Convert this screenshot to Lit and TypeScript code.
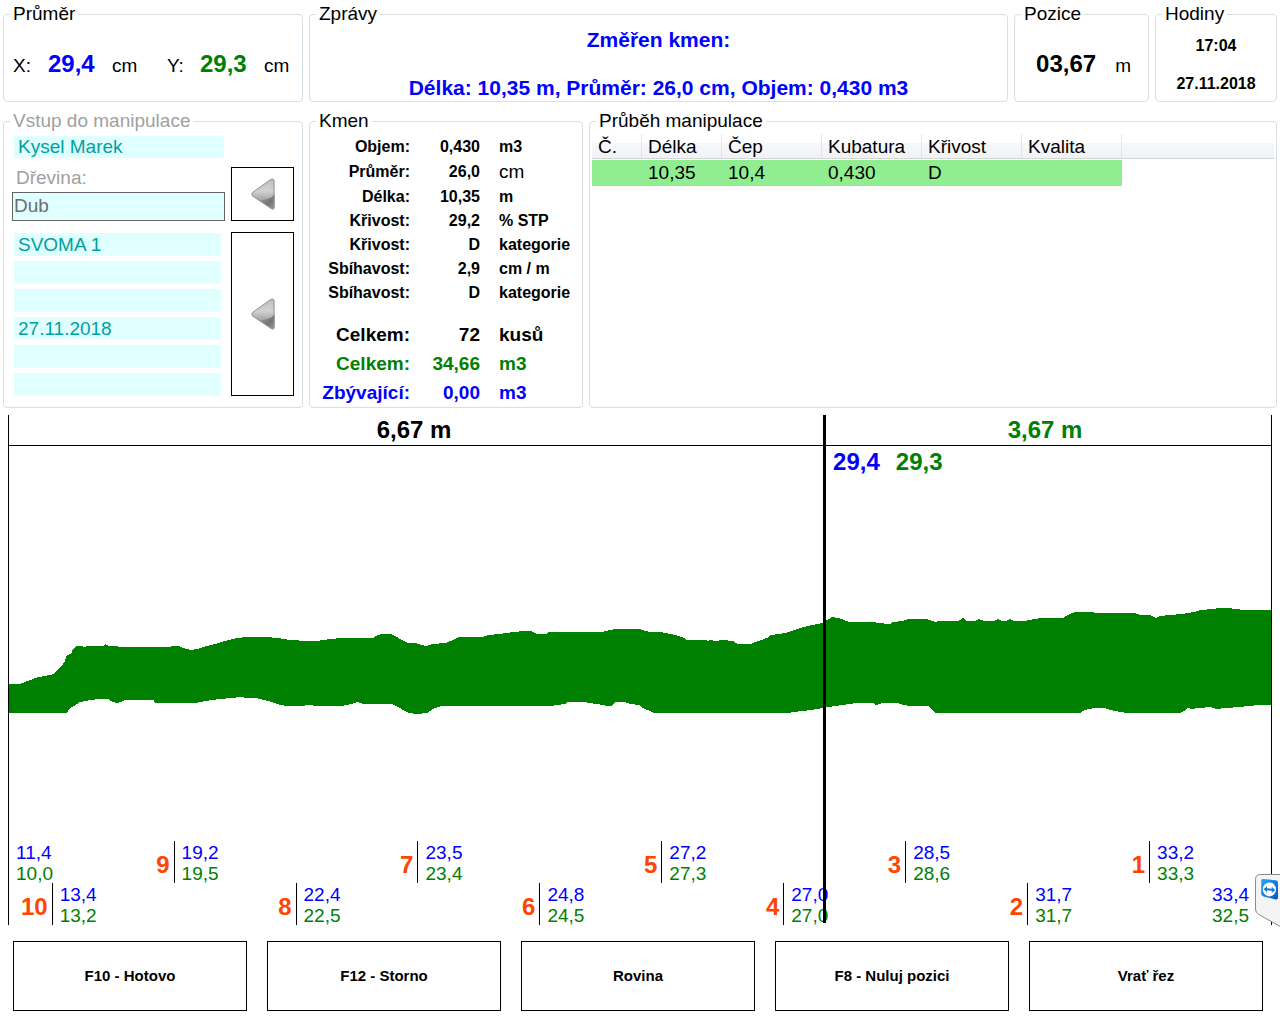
import { LitElement, html, svg, css } from "lit";
import { customElement, property } from "lit/decorators.js";
import { classMap } from "lit/directives/class-map.js";
import { styleMap } from "lit/directives/style-map.js";

const FONT = css`
  font-family: "Liberation Sans", Arial, Helvetica, sans-serif;
`;

/* Length of the measured stem and the saw position, in metres. */
const STEM_LENGTH = 10.34;
const SAW_POSITION = 3.67;

/* Outline of the stem, upper edge left to right. */
const TOP_EDGE =
  "9,684 20,684 25,682 33,679 38,677 45,676 54,674 57,670 61,667 65,661 67,655 71,654 73,649 77,646 82,646 84,647 88,646 103,646 105,644 109,646 127,647 170,647 171,646 179,646 186,649 191,650 197,649 203,647 215,644 225,641 237,638 247,637 265,637 278,638 290,640 308,641 316,641 330,639 342,638 373,638 378,635 382,634 391,634 397,637 402,640 408,643 416,643 421,645 426,646 432,644 446,643 453,640 459,637 482,637 488,635 500,634 513,632 525,631 531,631 537,634 546,634 549,632 602,632 615,629 639,629 650,632 661,632 675,635 684,638 687,640 706,640 707,641 710,640 716,641 722,640 733,641 738,644 751,644 758,641 767,638 771,635 785,633 800,628 812,625 823,623 826,620 829,619 832,617 842,619 849,622 874,622 877,623 890,624 893,622 902,621 909,619 927,619 935,622 939,621 958,621 960,620 963,618 967,621 975,621 979,619 984,621 994,621 998,619 1002,621 1006,621 1010,619 1014,621 1025,621 1029,620 1041,618 1063,618 1068,615 1075,612 1093,612 1094,613 1135,613 1140,615 1150,615 1156,618 1160,616 1170,615 1182,614 1194,612 1200,610 1213,609 1218,608 1230,608 1234,609 1246,610 1271,610";
/* Lower edge, right to left. */
const BOTTOM_EDGE =
  "1271,705 1260,705 1248,706 1240,707 1226,708 1216,709 1211,707 1198,708 1192,709 1187,708 1186,710 1180,713 1127,713 1120,712 1110,710 1104,708 1094,708 1085,710 1080,713 936,713 931,709 928,706 911,706 903,705 897,703 882,703 876,705 873,703 856,703 842,705 835,706 823,708 811,710 803,711 793,712 788,713 654,713 650,711 643,708 639,705 630,704 625,702 616,702 611,706 607,706 598,704 588,703 585,702 568,702 565,704 550,706 447,706 441,706 433,709 427,713 417,714 409,713 405,711 398,707 392,704 378,704 363,704 357,702 351,704 342,706 317,706 308,705 302,706 288,706 280,705 272,702 264,700 256,698 247,698 240,697 231,698 220,699 205,701 195,703 155,703 154,700 125,700 121,702 116,703 113,702 108,699 100,699 90,700 80,702 74,706 69,709 67,713 9,713";

interface Mark {
  metre: number;
  x: string;
  y: string;
}

const MARKS: Mark[] = [
  { metre: 10, x: "13,4", y: "13,2" },
  { metre: 9, x: "19,2", y: "19,5" },
  { metre: 8, x: "22,4", y: "22,5" },
  { metre: 7, x: "23,5", y: "23,4" },
  { metre: 6, x: "24,8", y: "24,5" },
  { metre: 5, x: "27,2", y: "27,3" },
  { metre: 4, x: "27,0", y: "27,0" },
  { metre: 3, x: "28,5", y: "28,6" },
  { metre: 2, x: "31,7", y: "31,7" },
  { metre: 1, x: "33,2", y: "33,3" },
];

/* Titled frame used by every panel. */
@customElement("group-box")
export class GroupBox extends LitElement {
  @property() caption = "";
  @property({ type: Boolean }) muted = false;

  static styles = css`
    :host {
      display: flex;
      min-width: 0;
      ${FONT}
    }
    .frame {
      flex: 1;
      min-width: 0;
      margin: 0;
      padding: 0 2px;
      border: 1px solid #d5dfe5;
      border-radius: 4px;
    }
    .caption {
      margin-left: 4px;
      padding: 0 3px;
      font-size: 19px;
      line-height: 22px;
      white-space: nowrap;
    }
    .muted {
      color: #a0a0a0;
    }
  `;

  render() {
    return html`<fieldset class="frame">
      <legend class=${classMap({ caption: true, muted: this.muted })}>${this.caption}</legend>
      <slot></slot>
    </fieldset>`;
  }
}

/* Two-edge profile of the stem with metre marks and the saw line. */
@customElement("stem-chart")
export class StemChart extends LitElement {
  static styles = css`
    :host {
      display: flex;
      flex-direction: column;
      position: relative;
      border-left: 1px solid #000;
      border-right: 1px solid #000;
      box-sizing: border-box;
      ${FONT}
    }
    .lengths {
      display: flex;
      border-bottom: 1px solid #000;
      font-size: 24px;
      font-weight: bold;
      line-height: 30px;
      text-align: center;
    }
    .length {
      box-sizing: border-box;
      padding-right: 4px;
    }
    .green {
      color: #008000;
    }
    .blue {
      color: #0000ff;
    }
    .profile {
      flex: 1 1 0px;
      height: 0;
      min-height: 0;
      width: 100%;
      display: block;
    }
    .scale {
      display: grid;
      grid-template-columns: minmax(0, 35fr) repeat(10, minmax(0, 100fr));
      grid-template-rows: 42px 42px;
      font-size: 19px;
      line-height: 21px;
      white-space: nowrap;
    }
    .upper {
      grid-row: 1;
    }
    .lower {
      grid-row: 2;
    }
    .sample {
      padding: 1px 0 0 7px;
      box-sizing: border-box;
    }
    .ticked {
      border-left: 1px solid #000;
    }
    .last {
      padding-right: 22px;
      text-align: right;
    }
    .metre {
      padding: 6px 4px 0 0;
      text-align: right;
      justify-self: end;
      font-size: 24px;
      line-height: 36px;
      font-weight: bold;
      color: #ff4500;
    }
    .saw {
      position: absolute;
      top: 0;
      bottom: 2px;
      border-left: 3px solid #000;
    }
    .reading {
      display: flex;
      gap: 16px;
      padding: 33px 0 0 7px;
      font-size: 24px;
      font-weight: bold;
      line-height: 28px;
    }
  `;

  render() {
    const left = ((STEM_LENGTH - SAW_POSITION) / STEM_LENGTH) * 100;
    return html`
      <div class="lengths">
        <div class="length" style=${styleMap({ width: `${left}%` })}>6,67 m</div>
        <div class="length green" style=${styleMap({ width: `${100 - left}%` })}>3,67 m</div>
      </div>
      <svg
        class="profile"
        viewBox="9 446 1262 395"
        preserveAspectRatio="none"
        shape-rendering="crispEdges"
        aria-hidden="true"
      >
        ${svg`<polygon fill="#008000" points="${TOP_EDGE} ${BOTTOM_EDGE}"></polygon>`}
      </svg>
      <div class="scale">
        <div class="sample upper" style=${styleMap({ gridColumn: "1" })}>
          <div class="blue">11,4</div>
          <div class="green">10,0</div>
        </div>
        ${MARKS.map((m, i) => {
          const row = m.metre % 2 ? "upper" : "lower";
          return html`
            <div class="metre ${row}" style=${styleMap({ gridColumn: `${i + 1}` })}>${m.metre}</div>
            <div class="sample ticked ${row}" style=${styleMap({ gridColumn: `${i + 2}` })}>
              <div class="blue">${m.x}</div>
              <div class="green">${m.y}</div>
            </div>
          `;
        })}
        <div class="sample last lower" style=${styleMap({ gridColumn: "11" })}>
          <div class="blue">33,4</div>
          <div class="green">32,5</div>
        </div>
      </div>
      <div class="saw" style=${styleMap({ left: `${left}%` })}>
        <div class="reading"><span class="blue">29,4</span><span class="green">29,3</span></div>
      </div>
    `;
  }
}

const arrow = () => html`<svg class="arrow" viewBox="0 0 24 32" aria-hidden="true">
  <defs>
    <linearGradient id="face" x1="0" y1="0" x2="0" y2="1">
      <stop offset="0" stop-color="#bdbdbd"></stop>
      <stop offset="0.4" stop-color="#d2d2d2"></stop>
      <stop offset="0.7" stop-color="#a4a4a4"></stop>
    </linearGradient>
    <linearGradient id="shade" x1="0" y1="0" x2="1" y2="1">
      <stop offset="0" stop-color="#a8a8a8"></stop>
      <stop offset="0.6" stop-color="#747474"></stop>
      <stop offset="1" stop-color="#9a9a9a"></stop>
    </linearGradient>
  </defs>
  <path
    d="M1.4 14.2 19.6 1.2Q23.3-.4 23.4 3V29.4Q23.2 32.4 20.2 30.8L1.4 18.2Q-.4 16.2 1.4 14.2Z"
    fill="url(#face)"
  ></path>
  <path d="M8 22.4Q20 21.6 23.4 16.5V29.4Q23.2 32.4 20.2 30.8Z" fill="url(#shade)"></path>
  <path
    d="M1.6 14.5 19.6 1.6Q22.9.2 23 3V29.2Q22.9 31.8 20.4 30.4L1.6 17.9Q0 16.2 1.6 14.5Z"
    fill="none"
    stroke="#929292"
    stroke-width="1"
  ></path>
</svg>`;

const STEM_ROWS = [
  ["Objem:", "0,430", "m3", "tall"],
  ["Průměr:", "26,0", "cm", "tall light"],
  ["Délka:", "10,35", "m", "tall"],
  ["Křivost:", "29,2", "% STP", ""],
  ["Křivost:", "D", "kategorie", ""],
  ["Sbíhavost:", "2,9", "cm / m", ""],
  ["Sbíhavost:", "D", "kategorie", ""],
];
const TOTAL_ROWS = [
  ["Celkem:", "72", "kusů", ""],
  ["Celkem:", "34,66", "m3", "green"],
  ["Zbývající:", "0,00", "m3", "blue"],
];
const BATCH = ["SVOMA 1", "", "", "27.11.2018", "", ""];
const ACTIONS = ["F10 - Hotovo", "F12 - Storno", "Rovina", "F8 - Nuluj pozici", "Vrať řez"];

@customElement("app-root")
export class AppRoot extends LitElement {
  static styles = css`
    :host {
      display: flex;
      flex-direction: column;
      position: relative;
      box-sizing: border-box;
      min-height: 100vh;
      padding-top: 3px;
      overflow: hidden;
      background: #fff;
      color: #000;
      font-size: 19px;
      line-height: 22px;
      ${FONT}
    }
    .row {
      display: grid;
      gap: 6px;
      padding: 0 3px;
    }
    .status {
      grid-template-columns: 300px minmax(0, 1fr) 135px 122px;
      margin-bottom: 8px;
    }
    .panels {
      grid-template-columns: 300px 274px minmax(0, 1fr);
      margin-bottom: 7px;
    }
    .blue {
      color: #0000ff;
    }
    .green {
      color: #008000;
    }

    .diameter {
      display: grid;
      grid-template-columns: 35px 64px 55px 33px 64px auto;
      align-items: baseline;
      padding: 25px 0 0 7px;
    }
    .big {
      font-size: 24px;
      line-height: 28px;
      font-weight: bold;
    }
    .messages {
      display: flex;
      flex-direction: column;
      gap: 22px;
      padding-top: 2px;
      text-align: center;
      font-size: 21px;
      line-height: 26px;
      font-weight: bold;
    }
    .message {
      margin: 0;
      min-height: 26px;
    }
    .position {
      display: flex;
      justify-content: flex-end;
      align-items: baseline;
      gap: 19px;
      padding: 25px 15px 0 0;
    }
    .clock {
      display: flex;
      flex-direction: column;
      gap: 16px;
      padding-top: 10px;
      text-align: center;
      font-size: 16px;
      font-weight: bold;
    }

    .entry {
      display: grid;
      grid-template-columns: minmax(0, 1fr) 63px;
      column-gap: 6px;
      padding: 4px 6px 0;
    }
    .field {
      box-sizing: border-box;
      display: block;
      width: 100%;
      height: 23px;
      margin: 0;
      padding: 0 4px;
      border: 0;
      border-radius: 0;
      outline: 0;
      background: #e0ffff;
      color: #00a0a0;
      font: inherit;
    }
    .owner {
      padding: 0 1px 9px 2px;
    }
    .owner .field {
      height: 22px;
    }
    .species {
      grid-column: 1;
      display: flex;
      flex-direction: column;
      gap: 3px;
    }
    .label {
      padding-left: 4px;
      color: #a0a0a0;
    }
    .species .field {
      height: 29px;
      padding: 0 1px 2px;
      border: 1px solid #646464;
      color: #6d6d6d;
    }
    .batch {
      grid-column: 1;
      display: flex;
      flex-direction: column;
      gap: 5px;
      margin-top: 11px;
      padding: 1px 4px 0 2px;
    }
    .pick {
      grid-column: 2;
      display: flex;
      align-items: center;
      justify-content: center;
      padding: 0;
      border: 1px solid #000;
      background: #fff;
    }
    .pick.long {
      margin-top: 11px;
    }
    .arrow {
      width: 24px;
      height: 32px;
    }

    .facts {
      width: 100%;
      padding-top: 2px;
      border-spacing: 0;
      table-layout: fixed;
      font-size: 16px;
      font-weight: bold;
      white-space: nowrap;
    }
    .facts td,
    .facts th {
      padding: 0;
      height: 24px;
      line-height: 22px;
    }
    .facts .tall td,
    .facts .tall th {
      height: 25px;
    }
    .facts th,
    .facts .amount {
      text-align: right;
    }
    .facts .name {
      width: 98px;
    }
    .facts .amount {
      width: 70px;
    }
    .facts .unit {
      padding-left: 19px;
    }
    .facts .light .unit {
      font-size: 19px;
      font-weight: normal;
    }
    .totals {
      margin-top: 13px;
      font-size: 19px;
    }
    .totals td,
    .totals th {
      height: 29px;
    }

    .log {
      width: 100%;
      padding-top: 2px;
      border-spacing: 0;
      table-layout: fixed;
      text-align: left;
      white-space: nowrap;
    }
    .log th {
      box-sizing: border-box;
      height: 25px;
      padding: 2px 0 0 6px;
      border-bottom: 1px solid #d5d5d5;
      background: linear-gradient(#fff 9px, #f7f8fa 9px, #f1f2f4);
      box-shadow: inset -1px 0 #e3e4e6;
      font-weight: normal;
    }
    .log th:last-child {
      box-shadow: none;
    }
    .log td {
      height: 26px;
      padding: 0 0 0 6px;
      background: #90ee90;
      border-top: 1px solid #fff;
    }
    .log td:last-child {
      background: none;
    }
    .log .w50 {
      width: 50px;
    }
    .log .w80 {
      width: 80px;
    }
    .log .w100 {
      width: 100px;
    }

    .chart {
      flex: 1 1 360px;
      margin: 0 8px;
    }

    .actions {
      display: flex;
      gap: 20px;
      padding: 16px 17px 13px 13px;
    }
    .action {
      flex: 1;
      min-width: 0;
      padding: 23px 4px;
      border: 1px solid #000;
      background: #fff;
      color: #000;
      font: bold 15px/22px "Liberation Sans", Arial, sans-serif;
    }

    .remote {
      position: absolute;
      right: 0;
      bottom: 96px;
      padding: 0;
      border: 0;
      background: none;
    }
    .remote-icon {
      display: block;
      width: 25px;
      height: 54px;
    }
  `;

  private facts(rows: string[][], extra = "") {
    return html`<table class="facts ${extra}">
      <tbody>
        ${rows.map(
          ([name, amount, unit, kind]) => html`<tr class=${kind}>
            <th class="name" scope="row">${name}</th>
            <td class="amount">${amount}</td>
            <td class="unit">${unit}</td>
          </tr>`
        )}
      </tbody>
    </table>`;
  }

  render() {
    return html`
      <div class="row status">
        <group-box caption="Průměr">
          <div class="diameter">
            <span>X:</span><span class="big blue">29,4</span><span>cm</span>
            <span>Y:</span><span class="big green">29,3</span><span>cm</span>
          </div>
        </group-box>
        <group-box caption="Zprávy">
          <div class="messages blue">
            <p class="message">Změřen kmen:</p>
            <p class="message">Délka: 10,35 m, Průměr: 26,0 cm, Objem: 0,430 m3</p>
          </div>
        </group-box>
        <group-box caption="Pozice">
          <div class="position"><span class="big">03,67</span><span>m</span></div>
        </group-box>
        <group-box caption="Hodiny">
          <div class="clock">
            <div>17:04</div>
            <div>27.11.2018</div>
          </div>
        </group-box>
      </div>

      <div class="row panels">
        <group-box caption="Vstup do manipulace" muted>
          <div class="entry">
            <div class="owner">
              <input class="field" aria-label="Vlastník" readonly .value=${"Kysel Marek"} />
            </div>
            <div class="species">
              <label class="label" for="species">Dřevina:</label>
              <input class="field" id="species" readonly .value=${"Dub"} />
            </div>
            <button class="pick" type="button" aria-label="Vybrat dřevinu">${arrow()}</button>
            <div class="batch">
              ${BATCH.map(
                (value, i) =>
                  html`<input class="field" aria-label=${`Údaj ${i + 1}`} readonly .value=${value} />`
              )}
            </div>
            <button class="pick long" type="button" aria-label="Vybrat vstup">${arrow()}</button>
          </div>
        </group-box>
        <group-box caption="Kmen">
          ${this.facts(STEM_ROWS)} ${this.facts(TOTAL_ROWS, "totals")}
        </group-box>
        <group-box caption="Průběh manipulace">
          <table class="log">
            <thead>
              <tr>
                <th class="w50">Č.</th>
                <th class="w80">Délka</th>
                <th class="w100">Čep</th>
                <th class="w100">Kubatura</th>
                <th class="w100">Křivost</th>
                <th class="w100">Kvalita</th>
                <th></th>
              </tr>
            </thead>
            <tbody>
              <tr>
                <td></td>
                <td>10,35</td>
                <td>10,4</td>
                <td>0,430</td>
                <td>D</td>
                <td></td>
                <td></td>
              </tr>
            </tbody>
          </table>
        </group-box>
      </div>

      <stem-chart class="chart"></stem-chart>

      <div class="actions">
        ${ACTIONS.map((a) => html`<button class="action" type="button">${a}</button>`)}
      </div>

      <button class="remote" type="button" aria-label="Vzdálená podpora">
        <svg class="remote-icon" viewBox="0 0 25 54" aria-hidden="true">
          <defs>
            <linearGradient id="tv" x1="0" y1="0" x2="1" y2="1">
              <stop offset="0" stop-color="#2aa5f5"></stop>
              <stop offset="1" stop-color="#0a55c8"></stop>
            </linearGradient>
          </defs>
          <path
            d="M26 .5H5.500Q.5 .5 .5 5.500V35Q.5 38.500 3.500 40.300L26 53"
            fill="#f4f4f4"
            stroke="#8a8a8a"
          ></path>
          <path d="M7.500 5 21 6.200Q23 6.500 23 8.500V23.500Q23 26 20.500 25.400L8.500 22.400Q6.200 21.800 6.200 19.500V6.500Q6.200 5 7.500 5Z" fill="url(#tv)"></path>
          <ellipse cx="14.400" cy="15.400" rx="6.600" ry="7" fill="#fff"></ellipse>
          <path
            d="M8.600 15.200 12 12.200V14.300L16.800 14.700V12.700L20.200 16.200 16.800 18.800V16.800L12 16.300V18.200Z"
            fill="#1474dc"
          ></path>
        </svg>
      </button>
    `;
  }
}
